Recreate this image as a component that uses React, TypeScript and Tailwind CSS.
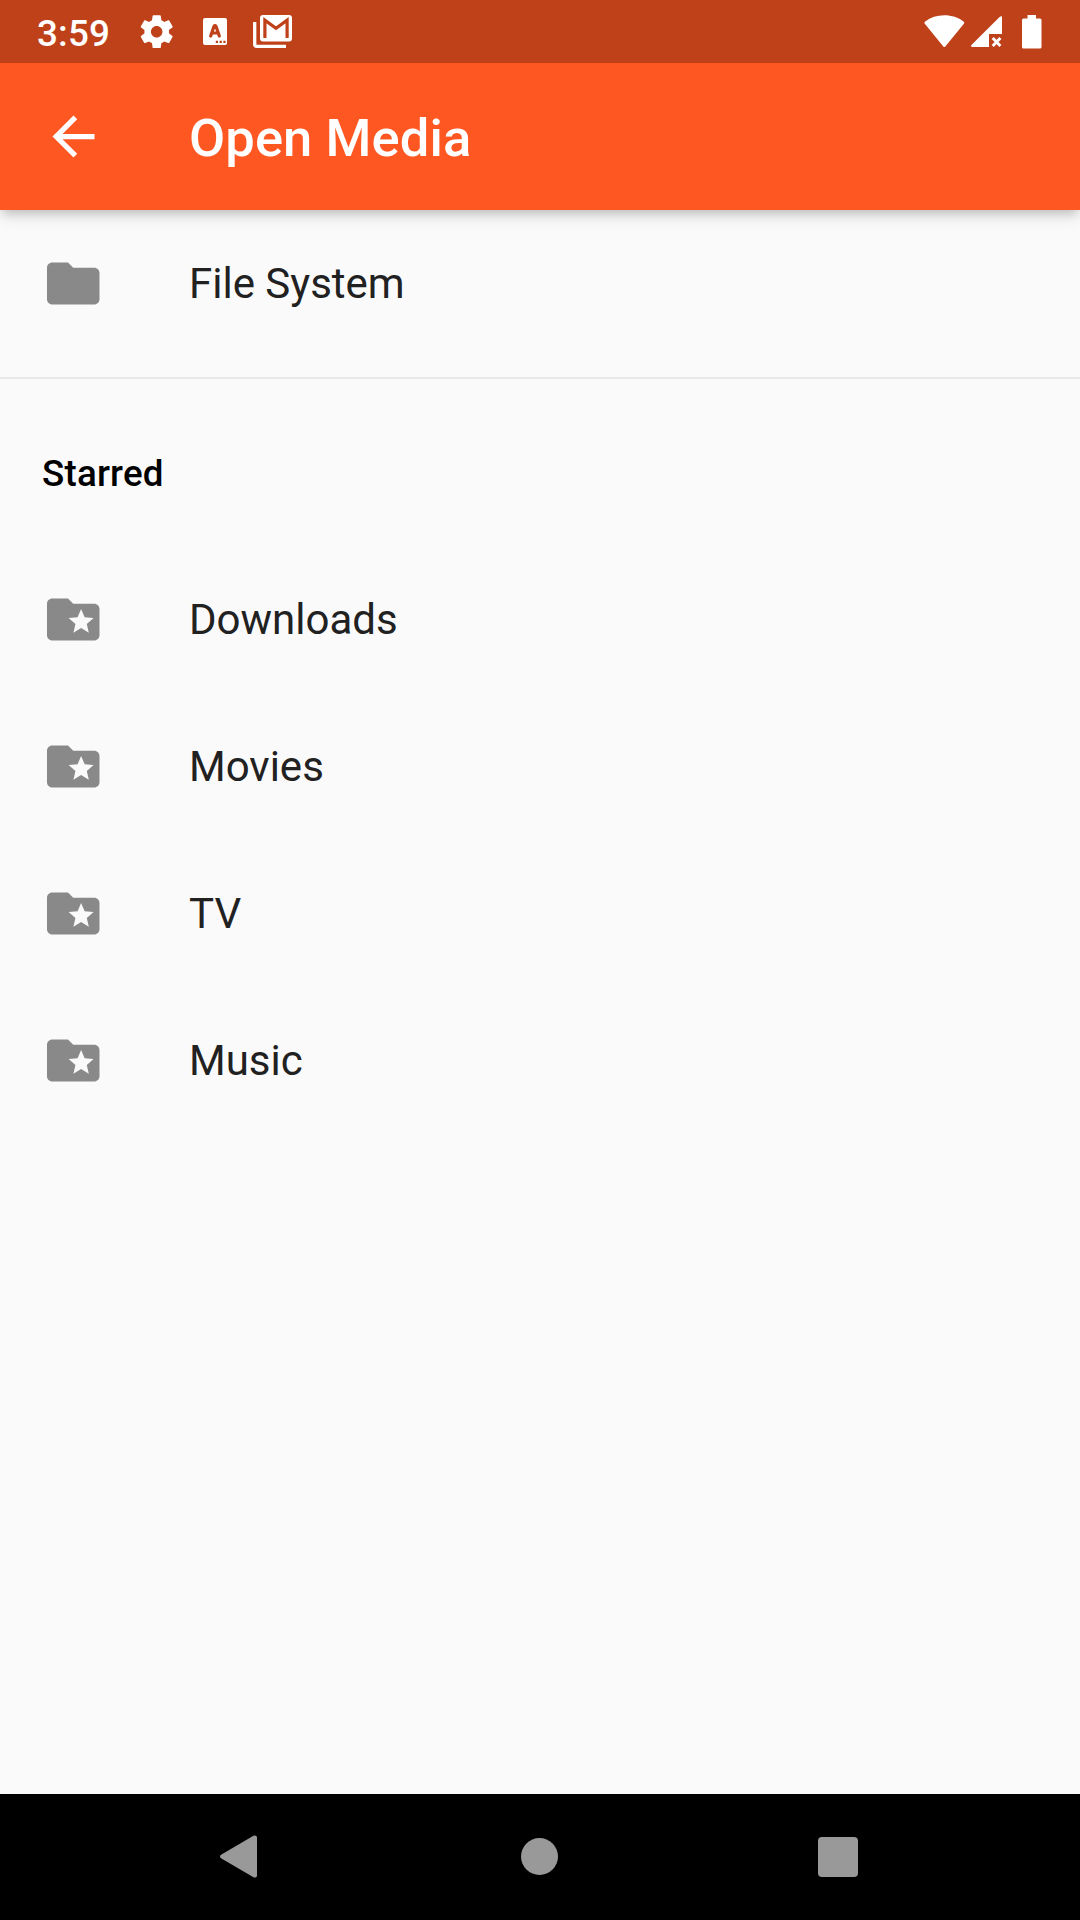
import React from "react";

function Gear() {
  return (
    <svg className="block" width="39.4" height="39.4" viewBox="0 0 24 24" fill="#fff">
      <path d="M19.43 12.98c.04-.32.07-.64.07-.98s-.03-.66-.07-.98l2.11-1.65c.19-.15.24-.42.12-.64l-2-3.46c-.12-.22-.39-.3-.61-.22l-2.49 1c-.52-.4-1.08-.73-1.69-.98l-.38-2.65C14.46 2.18 14.25 2 14 2h-4c-.25 0-.46.18-.49.42l-.38 2.65c-.61.25-1.17.59-1.69.98l-2.49-1c-.23-.09-.49 0-.61.22l-2 3.46c-.13.22-.07.49.12.64l2.11 1.65c-.04.32-.07.65-.07.98s.03.66.07.98l-2.11 1.65c-.19.15-.24.42-.12.64l2 3.46c.12.22.39.3.61.22l2.49-1c.52.4 1.08.73 1.69.98l.38 2.65c.03.24.24.42.49.42h4c.25 0 .46-.18.49-.42l.38-2.65c.61-.25 1.17-.59 1.69-.98l2.49 1c.23.09.49 0 .61-.22l2-3.46c.12-.22.07-.49-.12-.64l-2.11-1.65zM12 15.5c-1.93 0-3.5-1.57-3.5-3.5s1.57-3.5 3.5-3.5 3.5 1.57 3.5 3.5-1.57 3.5-3.5 3.5z" />
    </svg>
  );
}

function KeyboardBadge() {
  return (
    <svg className="block" width="24" height="27" viewBox="0 0 24 27">
      <rect width="24" height="27" rx="2" fill="#fff" />
      <path d="M7.700 18L11 8.300Q12 6.800 13 8.300L16.300 18M9.300 15h5.400" fill="none" stroke="#bf411a" strokeWidth="3.200" strokeLinecap="round" strokeLinejoin="round" />
      <path d="M12.800 22.800h2.200v2.200h-2.200zM16.600 22.800h2.200v2.200h-2.200zM20.400 22.800h2.200v2.200h-2.200z" fill="#bf411a" />
    </svg>
  );
}

function MailStack() {
  return (
    <svg className="block" width="39" height="33" viewBox="0 0 39 33">
      <path d="M1.700 7v22.300a2 2 0 0 0 2 2H33" fill="none" stroke="#fff" strokeWidth="3.300" />
      <rect x="7" y="0" width="32" height="26.500" rx="3" fill="#fff" />
      <path d="M11.900 23V5.200L23 13.200 34.100 5.200V23" fill="none" stroke="#bf411a" strokeWidth="3.200" />
    </svg>
  );
}

function FolderIcon({ starred }: { starred?: boolean }) {
  return (
    <svg className="block shrink-0" width="63" height="63" viewBox="0 0 24 24" fill="#898989">
      <path
        d={
          starred
            ? "M20 6h-8l-2-2H4c-1.100 0-2 .9-2 2v12c0 1.100.9 2 2 2h16c1.100 0 2-.9 2-2V8c0-1.100-.9-2-2-2zm-2.060 11L15 15.280 12.060 17l.78-3.330-2.590-2.240 3.410-.29L15 8l1.340 3.140 3.410.29-2.590 2.240.78 3.330z"
            : "M10 4H4c-1.100 0-2 .9-2 2v12c0 1.100.9 2 2 2h16c1.100 0 2-.9 2-2V8c0-1.100-.9-2-2-2h-8l-2-2z"
        }
        transform="translate(-0.1 0)"
      />
    </svg>
  );
}

function Row({ label, starred }: { label: string; starred?: boolean }) {
  return (
    <li className="flex h-[147px] items-center gap-[84px] px-[42px]">
      <FolderIcon starred={starred} />
      <span className="text-[42px] leading-[49px] text-[#212121]">{label}</span>
    </li>
  );
}

export default function App() {
  return (
    <div className="flex h-[1920px] w-[1080px] flex-col overflow-hidden bg-[#fafafa] font-[Roboto,sans-serif]">
      <div className="z-20 flex h-[63px] shrink-0 items-center justify-between bg-[#bf411a] pr-[38px] pl-[37px]">
        <div className="flex items-center">
          <span className="w-[100px] pt-[3px] text-[36.75px] leading-[43px] font-medium tracking-[0.2px] text-white">3:59</span>
          <Gear />
          <div className="ml-[27px]"><KeyboardBadge /></div>
          <div className="ml-[26px]"><MailStack /></div>
        </div>
        <div className="flex items-center">
          <svg className="block" width="41" height="33" viewBox="0 0 41 33" fill="#fff">
            <path d="M19.300 31.400L.8 8.700Q-.1 7.300 1.200 6.400C6.500 2.400 13 .2 20.300.2S34.300 2.400 39.500 6.400Q40.800 7.300 39.900 8.700L21.300 31.400Q20.300 32.400 19.300 31.400z" />
          </svg>
          <svg className="ml-[6px] block" width="31" height="33" viewBox="0 0 31 33" fill="#fff">
            <path d="M31 1.500v17.500H18v13H1Q-.6 31.500.4 29.900L28.600 2Q30 .7 31 1.500z" />
            <path d="M21.700 23l7.700 8M29.400 23L21.700 31" fill="none" stroke="#fff" strokeWidth="2.900" />
          </svg>
          <svg className="ml-[20px] block" width="20" height="34" viewBox="0 0 20 34" fill="#fff">
            <path d="M5.500 0h8.500v3.500h4a1.500 1.500 0 0 1 1.500 1.500v27a1.500 1.500 0 0 1-1.500 1.500h-16.500a1.500 1.500 0 0 1-1.500-1.500v-27a1.500 1.500 0 0 1 1.500-1.500h4z" />
          </svg>
        </div>
      </div>
      <header className="z-10 flex h-[147px] shrink-0 items-center gap-[84px] bg-[#ff5722] px-[42px] shadow-[0_5px_10px_-3px_rgba(0,0,0,0.2),0_10px_13px_rgba(0,0,0,0.06),0_3px_20px_rgba(0,0,0,0.04)]">
        <svg className="block" width="63" height="63" viewBox="0 0 24 24" fill="#fff">
          <path d="M20 11H7.830l5.590-5.590L12 4l-8 8 8 8 1.410-1.410L7.830 13H20v-2z" />
        </svg>
        <h1 className="pt-[2px] text-[52.5px] leading-[62px] font-medium tracking-[0.1px] text-white">Open Media</h1>
      </header>
      <main className="flex-1">
        <ul><Row label="File System" /></ul>
        <div className="flex h-[42px] items-center"><div className="h-[2px] w-full bg-[#e9e9e9]" /></div>
        <h2 className="flex h-[147px] items-center px-[42px] pt-[2px] text-[36.75px] leading-[43px] font-medium tracking-[0.2px] text-black">Starred</h2>
        <ul>
          <Row label="Downloads" starred />
          <Row label="Movies" starred />
          <Row label="TV" starred />
          <Row label="Music" starred />
        </ul>
      </main>
      <nav className="flex h-[126px] shrink-0 items-center bg-black pb-[1px] pl-[220px]">
        <svg className="block" width="37" height="43" viewBox="0 0 37 43" fill="#999">
          <path d="M1 19.700L33.500.7C35 0 37 .5 37 2.500v38c0 2-2 2.500-3.500 1.800L1 23.300c-1.300-.9-1.300-2.700 0-3.600z" />
        </svg>
        <div className="ml-[264px] size-[37px] rounded-full bg-[#999]" />
        <div className="ml-[260px] size-[40px] rounded-[4px] bg-[#999]" />
      </nav>
    </div>
  );
}
